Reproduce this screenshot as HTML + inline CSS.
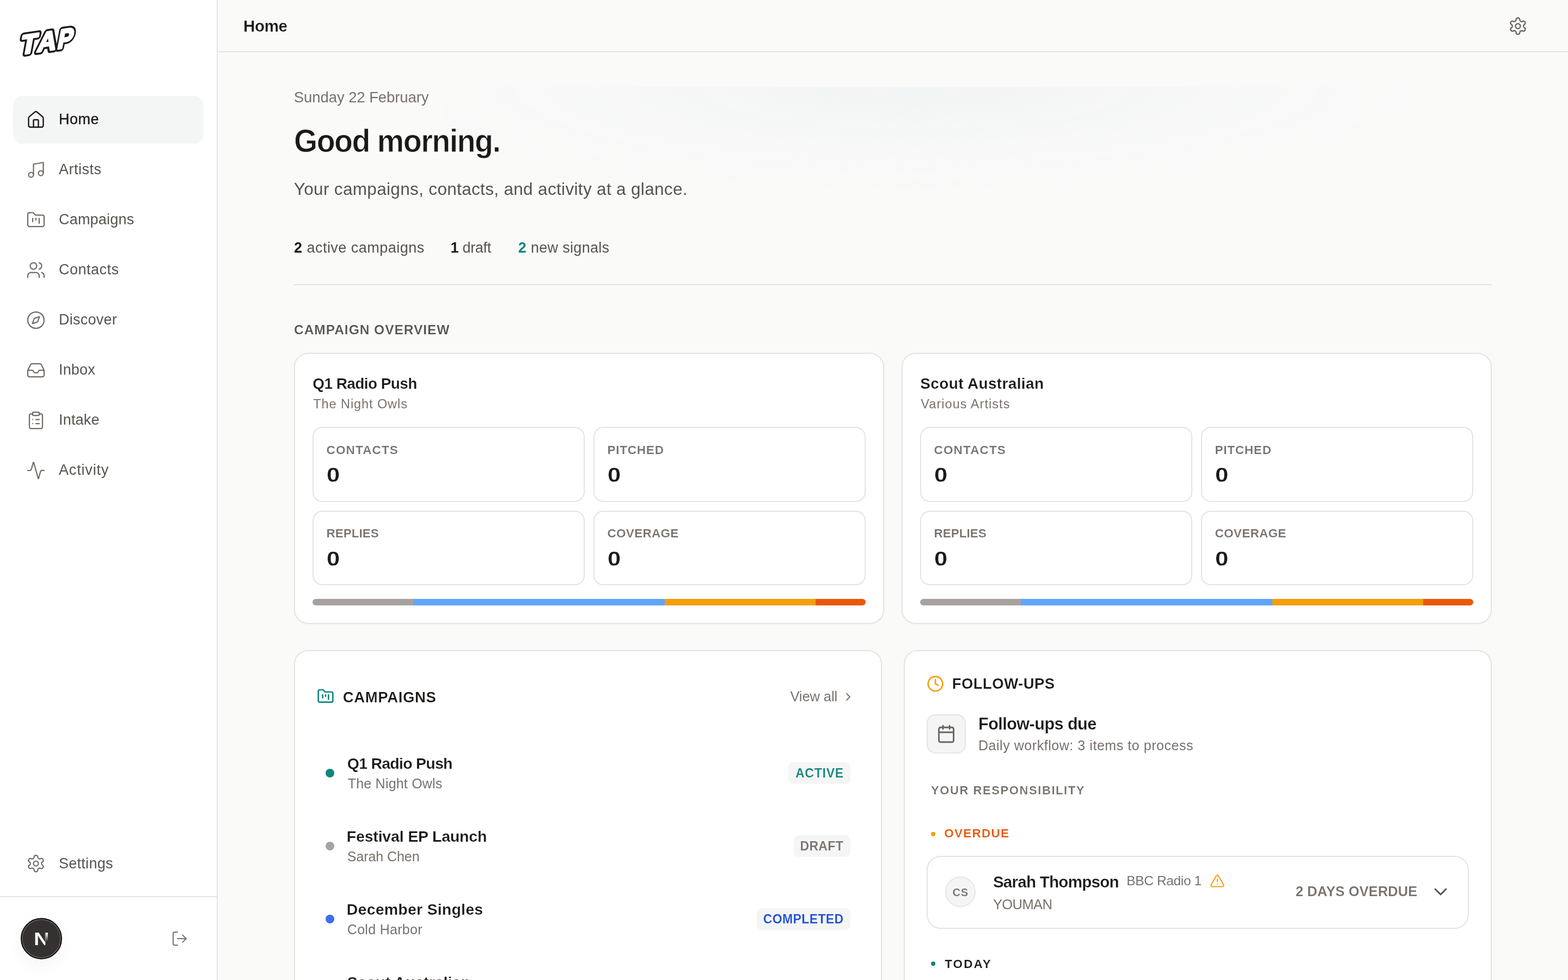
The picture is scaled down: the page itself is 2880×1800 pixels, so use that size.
<!DOCTYPE html>
<html lang="en">
<head>
<meta charset="utf-8">
<title>Home</title>
<style>
*{box-sizing:border-box;margin:0;padding:0}
html,body{width:2880px;height:1800px;overflow:hidden;background:#fafaf9}
body{font-family:"Liberation Sans",sans-serif;color:#1c1917;position:relative}
.ic{display:block;flex:none}
.abs{position:absolute}
h1,h2{font-weight:inherit;font-size:inherit}
/* sidebar */
#sidebar,#topbar,main{will-change:transform}
main{position:absolute;left:0;top:0;width:2880px;height:1800px;overflow:hidden}
#sidebar{position:absolute;left:0;top:0;width:400px;height:1800px;background:#fff;border-right:2px solid #e5e4e2}
#logo{position:absolute;left:0;top:0;overflow:visible}
.nav{position:absolute;left:24px;width:350px;height:88px;border-radius:18px;display:flex;align-items:center;padding-left:24px;color:#57534e;font-size:27px;letter-spacing:.5px;text-decoration:none}
.nav span{margin-left:24px;position:relative;top:-1px}
.nav svg{color:#736c67}
.nav.active{background:#f4f5f5;color:#1c1917}
.nav.active svg{color:#1c1917}
.nav.active span{-webkit-text-stroke:.35px #1c1917}
#sdiv{position:absolute;left:0;top:1646px;width:398px;height:2px;background:#e5e4e2}
#ncircle{position:absolute;left:38px;top:1686px;width:76px;height:76px;border-radius:50%;background:#343130;border:2px solid #100e0d;box-shadow:inset 0 0 0 1.5px rgba(255,255,255,.26),0 14px 30px rgba(0,0,0,.04),0 0 36px 10px rgba(0,0,0,.012)}
#ncircle span{transform:scaleX(1.2);transform-origin:0 0;position:absolute;left:21.5px;top:19.5px;font-size:33px;line-height:1;font-weight:700;color:transparent;background:linear-gradient(#fff,#fff) left/74% 100% no-repeat,linear-gradient(180deg,#fff 18%,rgba(255,255,255,0) 64%) right/26% 100% no-repeat;-webkit-background-clip:text;background-clip:text}
#logout{position:absolute;left:314px;top:1708px;color:#78716c}
/* topbar */
#topbar{position:absolute;left:400px;top:0;width:2480px;height:96px;border-bottom:2px solid #e5e4e2;background:#fafaf9}
#gear{position:absolute;left:2370px;top:30px;color:#6b6560}
/* hero */
#hero-glow{position:absolute;left:820px;top:160px;width:1960px;height:200px;background:radial-gradient(ellipse 52% 100% at 44% 0%,rgba(241,244,244,.9) 0%,rgba(244,246,246,.6) 50%,rgba(250,250,249,0) 100%)}
.t{position:absolute;white-space:nowrap;line-height:1}
.t b.teal{color:#10867c}
.t b{color:#1c1917}
#hr{position:absolute;left:540px;top:522px;width:2200px;height:2px;background:#e5e4e2}
/* cards */
.card{position:absolute;background:#fff;border:2px solid #e5e4e2;border-radius:26px;box-shadow:0 1px 3px rgba(0,0,0,.03)}
.sb{position:absolute;width:500px;height:137px;border:2px solid #e5e4e2;border-radius:18px;background:#fff}
.bar{position:absolute;left:32px;top:450px;width:1016px;height:12px;border-radius:6px;overflow:hidden;display:flex}
.bar i{display:block;height:100%}
.dot{position:absolute;width:16px;height:16px;border-radius:50%}
.badge{position:absolute;height:40px;border-radius:9px;background:#f4f5f5}

</style>
</head>
<body>
<div id="sidebar">
  <svg id="logo" width="200" height="140" viewBox="0 0 200 140">
    <g transform="translate(36,100) rotate(-8.5) skewX(-19)" font-family="Liberation Sans, sans-serif" font-weight="700" font-size="48" stroke-linejoin="round" stroke-linecap="round">
      <text x="0" y="0" stroke="#1c1917" stroke-width="11" fill="#1c1917">T</text>
      <text x="0" y="0" stroke="#fff" stroke-width="4" fill="#fff">T</text>
      <text x="31" y="0" stroke="#1c1917" stroke-width="11" fill="#1c1917">A</text>
      <text x="31" y="0" stroke="#fff" stroke-width="3.6" fill="#fff">A</text>
      <g transform="translate(69,0) scale(0.86,1)">
        <text x="0" y="0" stroke="#1c1917" stroke-width="11" fill="#1c1917">P</text>
        <ellipse cx="19" cy="-23" rx="5" ry="3.5" fill="#1c1917"/>
        <text x="0" y="0" stroke="#fff" stroke-width="4" fill="#fff">P</text>
      </g>
    </g>
  </svg>
  <nav>
    <a class="nav active" style="top:176px"><svg class="ic" width="36" height="36" viewBox="0 0 24 24" fill="none" stroke="currentColor" stroke-width="1.6" stroke-linecap="round" stroke-linejoin="round" style=""><path d="M15 21v-8a1 1 0 0 0-1-1h-4a1 1 0 0 0-1 1v8"/><path d="M3 10a2 2 0 0 1 .709-1.528l7-5.999a2 2 0 0 1 2.582 0l7 5.999A2 2 0 0 1 21 10v9a2 2 0 0 1-2 2H5a2 2 0 0 1-2-2z"/></svg><span>Home</span></a>
    <a class="nav" style="top:268px"><svg class="ic" width="36" height="36" viewBox="0 0 24 24" fill="none" stroke="currentColor" stroke-width="1.5" stroke-linecap="round" stroke-linejoin="round" style=""><path d="M9 18V5l12-2v13"/><circle cx="6" cy="18" r="3"/><circle cx="18" cy="16" r="3"/></svg><span>Artists</span></a>
    <a class="nav" style="top:360px"><svg class="ic" width="36" height="36" viewBox="0 0 24 24" fill="none" stroke="currentColor" stroke-width="1.5" stroke-linecap="round" stroke-linejoin="round" style=""><path d="M4 20h16a2 2 0 0 0 2-2V8a2 2 0 0 0-2-2h-7.93a2 2 0 0 1-1.66-.9l-.82-1.2A2 2 0 0 0 7.93 3H4a2 2 0 0 0-2 2v13c0 1.1.9 2 2 2Z"/><path d="M8 10v4"/><path d="M12 10v2"/><path d="M16 10v6"/></svg><span style="letter-spacing:0.2px">Campaigns</span></a>
    <a class="nav" style="top:452px"><svg class="ic" width="36" height="36" viewBox="0 0 24 24" fill="none" stroke="currentColor" stroke-width="1.5" stroke-linecap="round" stroke-linejoin="round" style=""><path d="M16 21v-2a4 4 0 0 0-4-4H6a4 4 0 0 0-4 4v2"/><circle cx="9" cy="7" r="4"/><path d="M22 21v-2a4 4 0 0 0-3-3.87"/><path d="M16 3.13a4 4 0 0 1 0 7.75"/></svg><span>Contacts</span></a>
    <a class="nav" style="top:544px"><svg class="ic" width="36" height="36" viewBox="0 0 24 24" fill="none" stroke="currentColor" stroke-width="1.5" stroke-linecap="round" stroke-linejoin="round" style=""><path d="m16.24 7.76-1.804 5.411a2 2 0 0 1-1.265 1.265L7.76 16.24l1.804-5.411a2 2 0 0 1 1.265-1.265z"/><circle cx="12" cy="12" r="10"/></svg><span style="letter-spacing:0.26px">Discover</span></a>
    <a class="nav" style="top:636px"><svg class="ic" width="36" height="36" viewBox="0 0 24 24" fill="none" stroke="currentColor" stroke-width="1.5" stroke-linecap="round" stroke-linejoin="round" style=""><polyline points="22 12 16 12 14 15 10 15 8 12 2 12"/><path d="M5.45 5.11 2 12v6a2 2 0 0 0 2 2h16a2 2 0 0 0 2-2v-6l-3.45-6.89A2 2 0 0 0 16.76 4H7.24a2 2 0 0 0-1.79 1.11z"/></svg><span style="letter-spacing:0.15px">Inbox</span></a>
    <a class="nav" style="top:728px"><svg class="ic" width="36" height="36" viewBox="0 0 24 24" fill="none" stroke="currentColor" stroke-width="1.5" stroke-linecap="round" stroke-linejoin="round" style=""><rect width="8" height="4" x="8" y="2" rx="1" ry="1"/><path d="M16 4h2a2 2 0 0 1 2 2v14a2 2 0 0 1-2 2H6a2 2 0 0 1-2-2V6a2 2 0 0 1 2-2h2"/><path d="M12 11h4"/><path d="M12 16h4"/><path d="M8 11h.01"/><path d="M8 16h.01"/></svg><span style="letter-spacing:0.2px">Intake</span></a>
    <a class="nav" style="top:820px"><svg class="ic" width="36" height="36" viewBox="0 0 24 24" fill="none" stroke="currentColor" stroke-width="1.5" stroke-linecap="round" stroke-linejoin="round" style=""><path d="M22 12h-2.48a2 2 0 0 0-1.93 1.46l-2.35 8.36a.25.25 0 0 1-.48 0L9.24 2.18a.25.25 0 0 0-.48 0l-2.35 8.36A2 2 0 0 1 4.49 12H2"/></svg><span style="letter-spacing:0.83px">Activity</span></a>
    <a class="nav" style="top:1542px"><svg class="ic" width="36" height="36" viewBox="0 0 24 24" fill="none" stroke="currentColor" stroke-width="1.5" stroke-linecap="round" stroke-linejoin="round" style=""><path d="M12.22 2h-.44a2 2 0 0 0-2 2v.18a2 2 0 0 1-1 1.73l-.43.25a2 2 0 0 1-2 0l-.15-.08a2 2 0 0 0-2.73.73l-.22.38a2 2 0 0 0 .73 2.73l.15.1a2 2 0 0 1 1 1.72v.51a2 2 0 0 1-1 1.74l-.15.09a2 2 0 0 0-.73 2.73l.22.38a2 2 0 0 0 2.73.73l.15-.08a2 2 0 0 1 2 0l.43.25a2 2 0 0 1 1 1.73V20a2 2 0 0 0 2 2h.44a2 2 0 0 0 2-2v-.18a2 2 0 0 1 1-1.73l.43-.25a2 2 0 0 1 2 0l.15.08a2 2 0 0 0 2.73-.73l.22-.39a2 2 0 0 0-.73-2.73l-.15-.08a2 2 0 0 1-1-1.74v-.5a2 2 0 0 1 1-1.74l.15-.09a2 2 0 0 0 .73-2.73l-.22-.38a2 2 0 0 0-2.73-.73l-.15.08a2 2 0 0 1-2 0l-.43-.25a2 2 0 0 1-1-1.73V4a2 2 0 0 0-2-2z"/><circle cx="12" cy="12" r="3"/></svg><span style="top:0;letter-spacing:0.27px">Settings</span></a>
  </nav>
  <div id="sdiv"></div>
  <div id="ncircle"><span>N</span></div>
  <div id="logout"><svg class="ic" width="32" height="32" viewBox="0 0 24 24" fill="none" stroke="currentColor" stroke-width="1.5" stroke-linecap="round" stroke-linejoin="round" style=""><path d="M9 21H5a2 2 0 0 1-2-2V5a2 2 0 0 1 2-2h4"/><polyline points="16 17 21 12 16 7"/><line x1="21" x2="9" y1="12" y2="12"/></svg></div>
</div>

<header id="topbar">
  <h1 class="t" style="left:47px;top:33px;font-size:29.5px;letter-spacing:-0.33px;font-weight:700;color:#1c1917;-webkit-text-stroke:0.24px #fafaf9">Home</h1>
  <div id="gear"><svg class="ic" width="36" height="36" viewBox="0 0 24 24" fill="none" stroke="currentColor" stroke-width="1.6" stroke-linecap="round" stroke-linejoin="round" style=""><path d="M12.22 2h-.44a2 2 0 0 0-2 2v.18a2 2 0 0 1-1 1.73l-.43.25a2 2 0 0 1-2 0l-.15-.08a2 2 0 0 0-2.73.73l-.22.38a2 2 0 0 0 .73 2.73l.15.1a2 2 0 0 1 1 1.72v.51a2 2 0 0 1-1 1.74l-.15.09a2 2 0 0 0-.73 2.73l.22.38a2 2 0 0 0 2.73.73l.15-.08a2 2 0 0 1 2 0l.43.25a2 2 0 0 1 1 1.73V20a2 2 0 0 0 2 2h.44a2 2 0 0 0 2-2v-.18a2 2 0 0 1 1-1.73l.43-.25a2 2 0 0 1 2 0l.15.08a2 2 0 0 0 2.73-.73l.22-.39a2 2 0 0 0-.73-2.73l-.15-.08a2 2 0 0 1-1-1.74v-.5a2 2 0 0 1 1-1.74l.15-.09a2 2 0 0 0 .73-2.73l-.22-.38a2 2 0 0 0-2.73-.73l-.15.08a2 2 0 0 1-2 0l-.43-.25a2 2 0 0 1-1-1.73V4a2 2 0 0 0-2-2z"/><circle cx="12" cy="12" r="3"/></svg></div>
</header>

<main>
<div id="hero-glow"></div>
<div class="t" style="left:539.8px;top:165.1px;font-size:27.5px;letter-spacing:-0.08px;color:#78716c">Sunday 22 February</div>
<h2 class="t" style="left:539.9px;top:229.6px;font-size:58.5px;letter-spacing:-1.61px;font-weight:700;color:#1c1917;-webkit-text-stroke:0.94px #fafaf9;transform:scaleX(0.95);transform-origin:0 0">Good morning.</h2>
<div class="t" style="left:539.8px;top:332.3px;font-size:31.5px;letter-spacing:0.33px;color:#57534e">Your campaigns, contacts, and activity at a glance.</div>
<div id="stats"><div class="t" style="left:540px;top:442px;font-size:27px;letter-spacing:0.47px;color:#57534e"><b>2</b> active campaigns</div><div class="t" style="left:827.5px;top:442px;font-size:27px;letter-spacing:-0.3px;color:#57534e"><b>1</b> draft</div><div class="t" style="left:951.8px;top:442px;font-size:27px;letter-spacing:0.31px;color:#57534e"><b class="teal">2</b> new signals</div></div>
<div id="hr"></div>
<div class="t" style="left:540px;top:593.8px;font-size:24.5px;letter-spacing:0.97px;font-weight:700;color:#57534e;-webkit-text-stroke:0.2px #fafaf9">CAMPAIGN OVERVIEW</div>

<section class="card ov" style="left:540px;top:648px;width:1084px;height:498px">
  <div class="t" style="left:32.3px;top:41px;font-size:28px;letter-spacing:-0.59px;font-weight:700;color:#1c1917;-webkit-text-stroke:0.22px #fff">Q1 Radio Push</div>
  <div class="t" style="left:33.3px;top:80.6px;font-size:23.5px;letter-spacing:0.92px;color:#78716c">The Night Owls</div>
  <div class="sb" style="left:32px;top:134px;height:138px"><div class="t" style="left:23.5px;top:29.5px;font-size:22.5px;letter-spacing:1.14px;font-weight:700;color:#78716c;-webkit-text-stroke:0.18px #fff">CONTACTS</div><div class="t" style="left:24.3px;top:69.2px;font-size:36.5px;font-weight:700;color:#1c1917;-webkit-text-stroke:0.29px #fff;transform:scaleX(1.19);transform-origin:0 0">0</div></div>
  <div class="sb" style="left:548px;top:134px;height:138px"><div class="t" style="left:23.5px;top:29.5px;font-size:22.5px;letter-spacing:0.77px;font-weight:700;color:#78716c;-webkit-text-stroke:0.18px #fff">PITCHED</div><div class="t" style="left:24.3px;top:69.2px;font-size:36.5px;font-weight:700;color:#1c1917;-webkit-text-stroke:0.29px #fff;transform:scaleX(1.19);transform-origin:0 0">0</div></div>
  <div class="sb" style="left:32px;top:288px"><div class="t" style="left:23.5px;top:29px;font-size:22.5px;letter-spacing:-0.02px;font-weight:700;color:#78716c;-webkit-text-stroke:0.18px #fff">REPLIES</div><div class="t" style="left:24.3px;top:68.7px;font-size:36.5px;font-weight:700;color:#1c1917;-webkit-text-stroke:0.29px #fff;transform:scaleX(1.19);transform-origin:0 0">0</div></div>
  <div class="sb" style="left:548px;top:288px"><div class="t" style="left:23.5px;top:29px;font-size:22.5px;letter-spacing:0.29px;font-weight:700;color:#78716c;-webkit-text-stroke:0.18px #fff">COVERAGE</div><div class="t" style="left:24.3px;top:68.7px;font-size:36.5px;font-weight:700;color:#1c1917;-webkit-text-stroke:0.29px #fff;transform:scaleX(1.19);transform-origin:0 0">0</div></div>
  <div class="bar"><i style="flex:2;background:#a8a29e"></i><i style="flex:5;background:#60a5fa"></i><i style="flex:3;background:#f59e0b"></i><i style="flex:1;background:#e8590c"></i></div>
</section>
<section class="card ov" style="left:1656px;top:648px;width:1084px;height:498px">
  <div class="t" style="left:32.3px;top:41px;font-size:28px;letter-spacing:0.35px;font-weight:700;color:#1c1917;-webkit-text-stroke:0.22px #fff">Scout Australian</div>
  <div class="t" style="left:33.3px;top:80.6px;font-size:23.5px;letter-spacing:1.05px;color:#78716c">Various Artists</div>
  <div class="sb" style="left:32px;top:134px;height:138px"><div class="t" style="left:23.5px;top:29.5px;font-size:22.5px;letter-spacing:1.14px;font-weight:700;color:#78716c;-webkit-text-stroke:0.18px #fff">CONTACTS</div><div class="t" style="left:24.3px;top:69.2px;font-size:36.5px;font-weight:700;color:#1c1917;-webkit-text-stroke:0.29px #fff;transform:scaleX(1.19);transform-origin:0 0">0</div></div>
  <div class="sb" style="left:548px;top:134px;height:138px"><div class="t" style="left:23.5px;top:29.5px;font-size:22.5px;letter-spacing:0.77px;font-weight:700;color:#78716c;-webkit-text-stroke:0.18px #fff">PITCHED</div><div class="t" style="left:24.3px;top:69.2px;font-size:36.5px;font-weight:700;color:#1c1917;-webkit-text-stroke:0.29px #fff;transform:scaleX(1.19);transform-origin:0 0">0</div></div>
  <div class="sb" style="left:32px;top:288px"><div class="t" style="left:23.5px;top:29px;font-size:22.5px;letter-spacing:-0.02px;font-weight:700;color:#78716c;-webkit-text-stroke:0.18px #fff">REPLIES</div><div class="t" style="left:24.3px;top:68.7px;font-size:36.5px;font-weight:700;color:#1c1917;-webkit-text-stroke:0.29px #fff;transform:scaleX(1.19);transform-origin:0 0">0</div></div>
  <div class="sb" style="left:548px;top:288px"><div class="t" style="left:23.5px;top:29px;font-size:22.5px;letter-spacing:0.29px;font-weight:700;color:#78716c;-webkit-text-stroke:0.18px #fff">COVERAGE</div><div class="t" style="left:24.3px;top:68.7px;font-size:36.5px;font-weight:700;color:#1c1917;-webkit-text-stroke:0.29px #fff;transform:scaleX(1.19);transform-origin:0 0">0</div></div>
  <div class="bar"><i style="flex:2;background:#a8a29e"></i><i style="flex:5;background:#60a5fa"></i><i style="flex:3;background:#f59e0b"></i><i style="flex:1;background:#e8590c"></i></div>
</section>

<section class="card" id="camp" style="left:540px;top:1194px;width:1080px;height:700px">
  <div class="abs" style="left:40px;top:67px;color:#10867c"><svg class="ic" width="32" height="32" viewBox="0 0 24 24" fill="none" stroke="currentColor" stroke-width="2.0" stroke-linecap="round" stroke-linejoin="round" style=""><path d="M4 20h16a2 2 0 0 0 2-2V8a2 2 0 0 0-2-2h-7.93a2 2 0 0 1-1.66-.9l-.82-1.2A2 2 0 0 0 7.93 3H4a2 2 0 0 0-2 2v13c0 1.1.9 2 2 2Z"/><path d="M8 10v4"/><path d="M12 10v2"/><path d="M16 10v6"/></svg></div>
  <div class="t" style="left:87.7px;top:71.2px;font-size:27.5px;letter-spacing:0.65px;font-weight:700;color:#1c1917;-webkit-text-stroke:0.22px #fff">CAMPAIGNS</div>
  <div class="t" style="left:909.4px;top:70.9px;font-size:25.5px;letter-spacing:-0.09px;color:#78716c">View all</div>
  <div class="abs" style="left:1004px;top:72px;color:#78716c"><svg class="ic" width="24" height="24" viewBox="0 0 24 24" fill="none" stroke="currentColor" stroke-width="1.8" stroke-linecap="round" stroke-linejoin="round" style=""><path d="m9 18 6-6-6-6"/></svg></div>

  <div class="dot" style="left:56px;top:216px;background:#10867c"></div>
  <div class="t" style="left:95.8px;top:191.8px;font-size:28.5px;letter-spacing:-0.76px;font-weight:700;color:#1c1917;-webkit-text-stroke:0.23px #fff">Q1 Radio Push</div>
  <div class="t" style="left:96.8px;top:230.9px;font-size:25px;letter-spacing:0.2px;color:#78716c">The Night Owls</div>
  <div class="badge" style="left:906px;top:204px;width:114px"><div class="t" style="left:12.9px;top:9px;font-size:23px;letter-spacing:0.78px;font-weight:700;color:#10867c;-webkit-text-stroke:0.18px #f4f5f5">ACTIVE</div></div>

  <div class="dot" style="left:56px;top:350px;background:#a8a29e"></div>
  <div class="t" style="left:94.8px;top:325.9px;font-size:28.5px;letter-spacing:-0.19px;font-weight:700;color:#1c1917;-webkit-text-stroke:0.23px #fff">Festival EP Launch</div>
  <div class="t" style="left:95.8px;top:365px;font-size:25px;letter-spacing:-0.07px;color:#78716c">Sarah Chen</div>
  <div class="badge" style="left:916px;top:338px;width:104px"><div class="t" style="left:11.5px;top:9.1px;font-size:23px;letter-spacing:0.32px;font-weight:700;color:#78716c;-webkit-text-stroke:0.18px #f4f5f5">DRAFT</div></div>

  <div class="dot" style="left:56px;top:484px;background:#3b6ef0"></div>
  <div class="t" style="left:94.8px;top:460px;font-size:28.5px;letter-spacing:0.21px;font-weight:700;color:#1c1917;-webkit-text-stroke:0.23px #fff">December Singles</div>
  <div class="t" style="left:95.8px;top:499.1px;font-size:25px;letter-spacing:0.3px;color:#78716c">Cold Harbor</div>
  <div class="badge" style="left:848px;top:472px;width:172px"><div class="t" style="left:11.7px;top:9.2px;font-size:23px;letter-spacing:0.39px;font-weight:700;color:#1d4ed8;-webkit-text-stroke:0.18px #f4f5f5">COMPLETED</div></div>

  <div class="t" style="left:95.8px;top:594.1px;font-size:28.5px;letter-spacing:0.04px;font-weight:700;color:#1c1917;-webkit-text-stroke:0.23px #fff">Scout Australian</div>
</section>

<section class="card" id="fu" style="left:1660px;top:1194px;width:1080px;height:700px">
  <div class="abs" style="left:40px;top:44px;color:#f59e0b"><svg class="ic" width="32" height="32" viewBox="0 0 24 24" fill="none" stroke="currentColor" stroke-width="2.0" stroke-linecap="round" stroke-linejoin="round" style=""><circle cx="12" cy="12" r="10"/><polyline points="12 6 12 12 16 14"/></svg></div>
  <div class="t" style="left:86.7px;top:45.5px;font-size:27.5px;letter-spacing:0.46px;font-weight:700;color:#1c1917;-webkit-text-stroke:0.22px #fff">FOLLOW-UPS</div>
  <div class="abs" style="left:40px;top:116px;width:72px;height:72px;border-radius:16px;background:#f4f5f5;border:2px solid #e7e5e4;display:flex;align-items:center;justify-content:center;color:#6b645f"><svg class="ic" width="36" height="36" viewBox="0 0 24 24" fill="none" stroke="currentColor" stroke-width="1.9" stroke-linecap="round" stroke-linejoin="round" style=""><path d="M8 2v4"/><path d="M16 2v4"/><rect width="18" height="18" x="3" y="4" rx="2"/><path d="M3 10h18"/></svg></div>
  <div class="t" style="left:135px;top:118.4px;font-size:31.5px;letter-spacing:-0.54px;font-weight:700;color:#1c1917;-webkit-text-stroke:0.25px #fff;transform:scaleX(0.97);transform-origin:0 0">Follow-ups due</div>
  <div class="t" style="left:134.9px;top:161.3px;font-size:25px;letter-spacing:0.55px;color:#78716c">Daily workflow: 3 items to process</div>
  <div class="t" style="left:48px;top:244.6px;font-size:22px;letter-spacing:1.58px;font-weight:700;color:#78716c;-webkit-text-stroke:0.18px #fff">YOUR RESPONSIBILITY</div>

  <div class="abs" style="left:48px;top:332px;width:8px;height:8px;border-radius:50%;background:#f59e0b"></div>
  <div class="t" style="left:72.2px;top:323.8px;font-size:22.5px;letter-spacing:1.27px;font-weight:700;color:#e8590c;-webkit-text-stroke:0.18px #fff">OVERDUE</div>

  <div class="abs" id="fuitem" style="left:40px;top:376px;width:996px;height:134px;border:2px solid #e5e4e2;border-radius:26px;background:#fff">
    <div class="abs" style="left:32px;top:36px;width:56px;height:56px;border-radius:50%;background:#f4f5f5;border:2px solid #e7e5e4"><div class="t" style="left:11.5px;top:16.8px;font-size:20px;letter-spacing:0.8px;font-weight:700;color:#78716c;-webkit-text-stroke:0.16px #f4f5f5">CS</div></div>
    <div class="t" style="left:119.9px;top:31px;font-size:29.5px;letter-spacing:-0.72px;font-weight:700;color:#1c1917;-webkit-text-stroke:0.24px #fff">Sarah Thompson</div>
    <div class="t" style="left:365.2px;top:32.2px;font-size:24.5px;letter-spacing:-0.36px;color:#78716c">BBC Radio 1</div>
    <div class="abs" style="left:518px;top:30px;color:#f59e0b"><svg class="ic" width="28" height="28" viewBox="0 0 24 24" fill="none" stroke="currentColor" stroke-width="1.8" stroke-linecap="round" stroke-linejoin="round" style=""><path d="m21.73 18-8-14a2 2 0 0 0-3.48 0l-8 14A2 2 0 0 0 4 21h16a2 2 0 0 0 1.73-3"/><path d="M12 9v4"/><path d="M12 17h.01"/></svg></div>
    <div class="t" style="left:119.9px;top:75.2px;font-size:25.5px;letter-spacing:-0.58px;color:#78716c">YOUMAN</div>
    <div class="t" style="left:675.7px;top:51px;font-size:25.5px;letter-spacing:0.05px;font-weight:700;color:#78716c;-webkit-text-stroke:0.2px #fff">2 DAYS OVERDUE</div>
    <div class="abs" style="left:922px;top:44px;color:#57534e"><svg class="ic" width="40" height="40" viewBox="0 0 24 24" fill="none" stroke="currentColor" stroke-width="1.8" stroke-linecap="round" stroke-linejoin="round" style=""><path d="m6 9 6 6 6-6"/></svg></div>
  </div>

  <div class="abs" style="left:48px;top:570px;width:8px;height:8px;border-radius:50%;background:#10867c"></div>
  <div class="t" style="left:73.2px;top:563.9px;font-size:22.5px;letter-spacing:2.05px;font-weight:700;color:#1c1917;-webkit-text-stroke:0.18px #fff">TODAY</div>
</section>
</main>

<script>(function(){var w=window.innerWidth;if(w>0&&w<2880){document.documentElement.style.zoom=w/2880}})();</script>
</body>
</html>
